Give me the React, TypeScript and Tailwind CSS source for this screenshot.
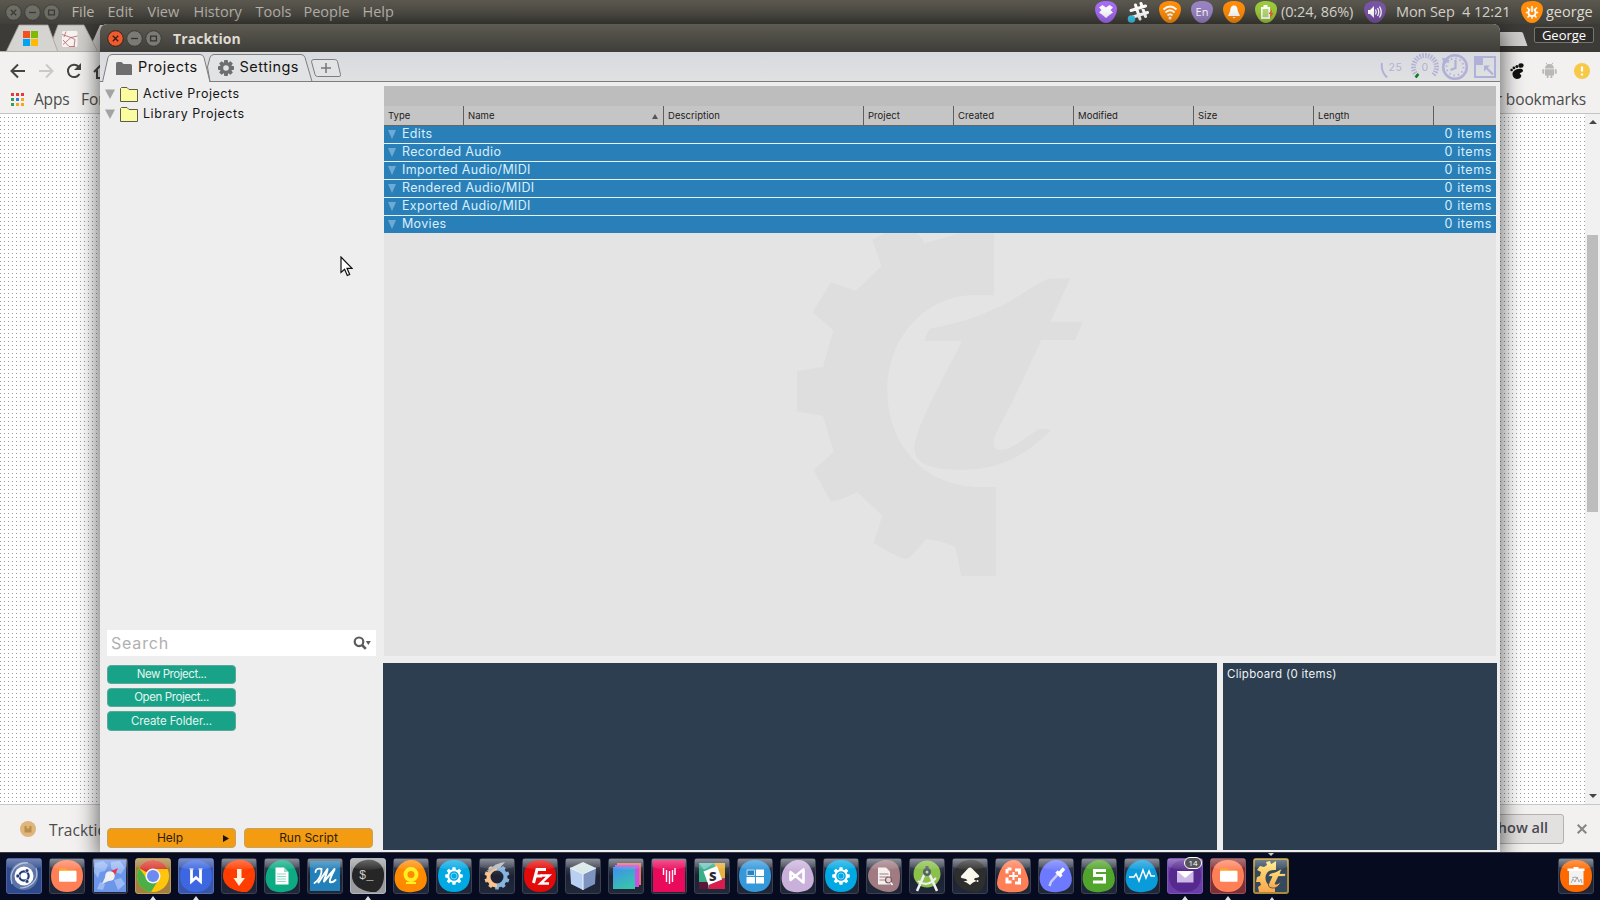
import type { ReactNode } from "react";

/* ---------- system bar ---------- */

function WinButton({ kind, hot = false }: { kind: "close" | "min" | "max"; hot?: boolean }) {
  return (
    <svg width="17" height="17" viewBox="0 0 17 17" className="shrink-0">
      <circle cx="8.5" cy="8.5" r="7.8" fill={hot ? "#ef5b2e" : "#7b7a74"} stroke={hot ? "#33251f" : "#3a3934"} strokeWidth="1" />
      <g fill="none" stroke={hot ? "#3c1c10" : "#35342f"} strokeWidth="1.3">
        {kind === "close" && <path d="M5.8 5.8l5.4 5.4M11.2 5.8l-5.4 5.4" />}
        {kind === "min" && <path d="M5 8.5h7" />}
        {kind === "max" && <path d="M5.6 6.1h5.8v4.8H5.6z" />}
      </g>
    </svg>
  );
}

const menus: [string, string][] = [
  ["File", "w-[36px]"],
  ["Edit", "w-[40px]"],
  ["View", "w-[46px]"],
  ["History", "w-[62px]"],
  ["Tools", "w-[48px]"],
  ["People", "w-[59px]"],
  ["Help", "w-[40px]"],
];

function Indicator({ color, children }: { color: string; children: ReactNode }) {
  return (
    <svg width="22" height="22" viewBox="0 0 22 22" className="shrink-0">
      <path d="M11 0C17 0 22 2.500 22 8C22 14 17 22 11 22C5 22 0 14 0 8C0 2.500 5 0 11 0z" fill={color} />
      {children}
    </svg>
  );
}

function SystemBar() {
  return (
    <div className="flex h-6 shrink-0 items-center bg-linear-to-b from-[#5b594f] to-[#403f3a] text-[14.5px] text-[#dfdbd2]">
      <div className="flex w-[71px] gap-[2px] pl-[5px] opacity-70">
        <WinButton kind="close" />
        <WinButton kind="min" />
        <WinButton kind="max" />
      </div>
      <div className="flex pl-[0.500px] text-[#bab6ad]">
        {menus.map(([label, w]) => (
          <span key={label} className={`${w} whitespace-nowrap`}>{label}</span>
        ))}
      </div>
      <div className="ml-auto flex items-center">
        <div className="flex gap-[10px]">
          <Indicator color="#a66cf5">
            <path d="M7.500 4L11 6.500L14.500 4L18 6.500L15.500 9L18 11.500L14.500 14L11 17L7.500 14L4 11.500L6.500 9L4 6.500z" fill="#fff" />
          </Indicator>
          <svg width="22" height="22" viewBox="0 0 22 22">
            <g stroke="#fff" strokeWidth="3" strokeLinecap="round">
              <path d="M8.500 4l4.500 14M14 2.500l4.500 13M4 9.500l14.500-4.500M6 16l14.500-4.500" />
            </g>
            <circle cx="4.500" cy="18" r="3.800" fill="#3fc8ee" />
          </svg>
          <Indicator color="#ff8c0a">
            <g fill="none" stroke="#fff" strokeWidth="1.900">
              <path d="M4.500 8.500Q11 2.500 17.500 8.500M6.500 11.500Q11 7 15.500 11.500M8.500 14.500Q11 12 13.500 14.500" />
            </g>
            <circle cx="11" cy="17" r="1.500" fill="#fff" />
          </Indicator>
          <Indicator color="#9a83c3">
            <text x="11" y="15" textAnchor="middle" fontSize="11" fill="#fff">En</text>
          </Indicator>
          <Indicator color="#ff8c0a">
            <path d="M11 4.500c3 0 3.600 2.500 3.800 5.500L17 15H5l2.200-5c.2-3 .8-5.500 3.800-5.500zM9.500 16h3l-1.500 1.500z" fill="#fff" />
          </Indicator>
          <Indicator color="#9ccb3b">
            <path d="M6 6h2.500V4h4v2H15v12H6z" fill="#fff" />
            <path d="M7.600 8h5.800v8H7.600z" fill="#b8dc72" />
            <path d="M17 8l-3.500 5h2l-.5 4 3.500-5h-2z" fill="#f05a3a" />
          </Indicator>
        </div>
        <span className="ml-[4px] w-[83px] whitespace-nowrap tracking-[-0.100px]">(0:24, 86%)</span>
        <Indicator color="#7a55a7">
          <path d="M4 9h2l4-4v12l-4-4H4z" fill="#fff" />
          <g fill="none" stroke="#fff" strokeWidth="1.300">
            <path d="M11.500 8.500q1.500 2.500 0 5M13.500 7q2.500 4 0 8M15.500 5.500q3.500 5.500 0 11" />
          </g>
        </Indicator>
        <span className="ml-[10px] w-[125px] whitespace-pre tracking-[-0.1px]">Mon Sep  4 12:21</span>
        <Indicator color="#ff8c0a">
          <circle cx="11" cy="11.500" r="3.600" fill="none" stroke="#fff" strokeWidth="2" />
          <path d="M9.300 5.500h3.400v4H9.300z" fill="#ff8c0a" />
          <path d="M11 5v6M6 6.500l2.200 2.200M16 6.500l-2.200 2.200M4.800 11.500h2.500M14.700 11.500h2.500M6.500 16.500l2-2M15.500 16.500l-2-2M11 15v2.800" stroke="#fff" strokeWidth="1.600" />
        </Indicator>
        <span className="ml-[3px] w-[54px] whitespace-nowrap">george</span>
      </div>
    </div>
  );
}

/* ---------- browser behind the window ---------- */

function Browser() {
  return (
    <div className="flex h-[828px] shrink-0 flex-col bg-white text-[#4c4c4c]">
      <div className="flex h-7 shrink-0 items-end justify-between bg-[#3c3b37]">
        <svg width="110" height="28" viewBox="0 0 110 28">
          <path d="M88 28L100 1H110V28z" fill="#cfcdca" />
          <path d="M48 28L58 1H84L98 28z" fill="#d1cfcc" stroke="#a3a09c" strokeWidth=".8" />
          <path d="M6 28L19 1H48L58 28z" fill="#d6d4d1" stroke="#a3a09c" strokeWidth=".8" />
          <path d="M23 7h7v7h-7z" fill="#f4511e" />
          <path d="M31 7h7v7h-7z" fill="#7fba00" />
          <path d="M23 15h7v7h-7z" fill="#00a4ef" />
          <path d="M31 15h7v7h-7z" fill="#ffb900" />
          <rect x="62" y="7" width="15.500" height="16" rx="1.500" fill="#f6f3f2" />
          <path d="M62 10.500l9 3 6.500-1.500M66 7.500l-2 5.500M71 13.500l-8 7M71 13.500l4 2-1 7M63 16l6 6.500h6" stroke="#b9605c" strokeWidth=".8" fill="none" />
          <path d="M0 27.500H110" stroke="#b5b2ae" strokeWidth="1" />
        </svg>
        <div className="flex items-start self-stretch">
          <svg width="34" height="28" viewBox="0 0 34 28">
            <path d="M0 8H21q1.500 0 2 1.300L27.500 22H0z" fill="#cfcecc" />
          </svg>
          <div className="mt-[3px] mr-[6px] flex h-4 w-[60px] items-center justify-center rounded-[2px] border border-[#777570] bg-[#2f2e2b] pt-px text-[13px] text-white">
            George
          </div>
        </div>
      </div>

      <div className="flex h-[37px] shrink-0 items-center justify-between bg-[#f2f1f0]">
        <svg width="110" height="37" viewBox="0 0 110 37" fill="none" strokeWidth="2">
          <path d="M25 19H12M18 12.500L11.500 19L18 25.500" stroke="#444" />
          <path d="M39 19H52M46 12.500L52.500 19L46 25.500" stroke="#cbc9c7" />
          <path d="M79.500 22A6.200 6.200 0 1 1 78.500 14.500" stroke="#444" />
          <path d="M81 11v7h-7z" fill="#444" />
          <path d="M94 20l7-7M97 18v8h8" stroke="#444" />
        </svg>
        <div className="flex items-center gap-[16px] pr-[10px]">
          <svg width="16" height="16" viewBox="0 0 16 16" fill="#111">
            <ellipse cx="12" cy="2.500" rx="2.600" ry="2.300" />
            <circle cx="7.900" cy="3.400" r="1.500" />
            <circle cx="4.900" cy="4.900" r="1.400" />
            <circle cx="2.600" cy="7" r="1.300" />
            <path d="M4 9c2-3.500 10-4.500 10-1.500 0 2.200-3 1.800-3.200 3.200-.1 1 1.500.3 1.500 2C12 15 10 16 8 16 4.500 16 2.500 11.500 4 9z" />
          </svg>
          <svg width="17" height="17" viewBox="0 0 17 17" fill="#b9b8b6">
            <path d="M4 6.500a4.500 4.500 0 0 1 9 0zM4 7.200h9v6.300H4zM1.300 7.300h1.900v4.500H1.300zM13.800 7.300h1.900v4.500h-1.900zM5.700 13.500h1.800V16H5.700zM9.500 13.500h1.800V16H9.500z" />
            <path d="M5 .8l1.500 2M12 .8l-1.500 2" stroke="#b9b8b6" />
          </svg>
          <svg width="16" height="16" viewBox="0 0 16 16">
            <circle cx="8" cy="8" r="8" fill="#f8c947" />
            <path d="M8 3.500v5M8 10.500v2" stroke="#fff" strokeWidth="2.200" />
          </svg>
        </div>
      </div>

      <div className="flex h-[25px] shrink-0 items-center border-b border-[#c6c4c1] bg-[#f2f1f0] pb-[3px] text-[15.500px]">
        <svg width="13" height="13" viewBox="0 0 13 13" className="-mt-px ml-[11px]">
          {["#e53935", "#e53935", "#e53935", "#2ea05a", "#2f7de1", "#f5a623", "#2ea05a", "#f5a623", "#f5a623"].map((c, i) => (
            <rect key={i} x={(i % 3) * 5} y={Math.floor(i / 3) * 5} width="3" height="3" fill={c} />
          ))}
        </svg>
        <span className="ml-[10px] w-[47px] tracking-[-0.2px]">Apps</span>
        <span>For</span>
        <span className="mr-[14px] ml-auto tracking-[-0.1px]">Other bookmarks</span>
      </div>

      <div className="flex min-h-0 flex-1">
        <div className="flex-1 bg-[conic-gradient(from_270deg_at_1px_1px,#9c9c9c_90deg,transparent_0)] bg-size-[4px_4px] bg-position-[0_3px]" />
        <div className="flex w-[15px] flex-col items-center justify-between bg-[#f1f1f1] pt-[6px] pb-[6px]">
          <svg width="8" height="4" viewBox="0 0 8 4"><path d="M0 4L4 0L8 4z" fill="#454545" /></svg>
          <div className="mt-[-171px] h-[277px] w-[11px] bg-[#bdbdbd]" />
          <svg width="8" height="4" viewBox="0 0 8 4"><path d="M0 0L4 4L8 0z" fill="#454545" /></svg>
        </div>
      </div>

      <div className="flex h-12 shrink-0 items-center border-t border-[#c9c8c6] bg-[#f2f1f0]">
        <svg width="16" height="16" viewBox="0 0 16 16" className="ml-[20px]">
          <circle cx="8" cy="8" r="8" fill="#dfb57c" />
          <path d="M4.500 5h2.200v2.500h2.600V5h2.200v6.500h-7z" fill="#b98d4c" />
        </svg>
        <span className="ml-[13px] pt-[4px] text-[15.500px]">Tracktion</span>
        <div className="ml-auto flex h-[30px] w-[94px] items-center justify-end rounded-[3px] border border-[#b4b2b0] bg-[#e2e1df] pr-[15px] text-[14.500px] font-semibold text-[#4a4a52]">
          Show all
        </div>
        <svg width="10" height="10" viewBox="0 0 10 10" className="mr-[13px] ml-[13px]">
          <path d="M.7 .7l8.600 8.600M9.300 .7L.7 9.300" stroke="#858585" strokeWidth="2" />
        </svg>
      </div>
    </div>
  );
}

/* ---------- Tracktion window ---------- */

function TitleBar() {
  return (
    <div className="flex h-7 shrink-0 items-center rounded-t-[7px] bg-linear-to-b from-[#5d5b52] to-[#3e3d38] pl-[7px] text-[14px] font-bold text-[#dfdbd2]">
      <div className="flex w-[66px] gap-[2px] pt-px">
        <WinButton kind="close" hot />
        <WinButton kind="min" />
        <WinButton kind="max" />
      </div>
      <span className="pt-px tracking-[0.1px]">Tracktion</span>
    </div>
  );
}

function StatusIcons() {
  return (
    <svg width="120" height="29" viewBox="1380 52 120 29" className="absolute top-0 right-0" fill="none" stroke="#b1b0d8">
      <path d="M1382 63q-1.500 8 5 14.500" strokeWidth="2" />
      <text x="1388.500" y="71" fontSize="10.500" fill="#b1b0d8" stroke="none">25</text>
      <path d="M1417.200 75.500A11.500 11.500 0 1 1 1432.800 75.500" strokeWidth="5" strokeDasharray="1.500 1.250" />
      <path d="M1418.300 74l-2.600 3.500" stroke="#0a7d14" strokeWidth="2.500" />
      <text x="1425" y="71" fontSize="10.500" fill="#b1b0d8" stroke="none" textAnchor="middle">0</text>
      <circle cx="1455" cy="67" r="11.800" strokeWidth="2.600" />
      <circle cx="1455" cy="67" r="8.500" strokeWidth="1.800" strokeDasharray="1.500 2.950" />
      <path d="M1455.500 60v8l-5 2" strokeWidth="2.200" />
      <path d="M1442 57.500l8 2.500-6 5z" fill="#b1b0d8" stroke="none" />
      <rect x="1475" y="57" width="20" height="20" strokeWidth="2" />
      <path d="M1475 57h8v8h-8z" fill="#b1b0d8" stroke="none" />
      <path d="M1485 66.500l8 8" strokeWidth="2.200" />
      <path d="M1484 65.500h6l-6 6z" fill="#b1b0d8" stroke="none" />
    </svg>
  );
}

function Tabs() {
  return (
    <div className="relative flex h-[30px] shrink-0 items-center bg-linear-to-b from-[#d9dadf] to-[#e0e1e2] text-[14.500px] tracking-[0.500px] text-[#161616]">
      <svg width="1400" height="30" viewBox="100 52 1400 30" className="absolute inset-0" stroke="#7d7d7d">
        <path d="M207.500 67L210 57.500Q211 54.500 214 54.500H301Q304 54.500 305 57.500L312 81.500H210z" fill="#e2e3e4" />
        <path d="M100 81.500H1500" />
        <path d="M102.500 82L108 57.500Q109 54.500 112 54.500H200Q203 54.500 204 57.500L210 82z" fill="#eeeeee" />
        <path d="M103.500 81.500H209" stroke="#eeeeee" strokeWidth="2" />
        <path d="M314 59.500H334.500Q337 59.500 337.500 61.500L340.500 74.500Q341 76.500 339 76.500H317.500Q315.500 76.500 315 74.500L311.500 61.500Q311.500 59.500 314 59.500z" fill="#e2e3e4" />
        <path d="M321 68H331M326 63V73" strokeWidth="1.500" stroke="#777" />
        <g fill="#6e6e6e" stroke="none">
          <path d="M116 63.500Q116 62 117.500 62H121.500L123.500 64H130.500Q132 64 132 65.500V75H116z" />
          <g transform="translate(226 68)">
            {[0, 45, 90, 135, 180, 225, 270, 315].map((a) => (
              <path key={a} d="M-1.700 -8H1.700L2.200 -5H-2.200z" transform={`rotate(${a})`} />
            ))}
          </g>
        </g>
        <circle cx="226" cy="68" r="4.300" fill="none" stroke="#6e6e6e" strokeWidth="3" />
      </svg>
      <span className="relative ml-[38px] w-[101.500px]">Projects</span>
      <span className="relative">Settings</span>
      <StatusIcons />
    </div>
  );
}

function TreeRow({ label }: { label: string }) {
  return (
    <div className="flex h-5 items-center text-[12.500px] tracking-[0.550px] text-[#161616]">
      <svg width="10" height="10" viewBox="0 0 10 10"><path d="M0 .5H10L5 10z" fill="#a3a3a3" /></svg>
      <svg width="18" height="15" viewBox="0 0 18 15" className="mx-[5px]">
        <path d="M.5 14.500V1.500L1.500 .5H7L9 2.500H17.500V14.500z" fill="#fbfba0" stroke="#5c5c48" />
      </svg>
      <span className="whitespace-nowrap">{label}</span>
    </div>
  );
}

const btn = "flex items-center justify-center rounded-[4px] border";

function Sidebar() {
  return (
    <div className="flex w-[283px] shrink-0 flex-col pt-[2px]">
      <div className="pl-[5px]">
        <TreeRow label="Active Projects" />
        <TreeRow label="Library Projects" />
      </div>
      <div className="mt-auto ml-[7px] flex h-[26px] w-[269px] items-center justify-between bg-white pr-[5px] pl-[4px] text-[16px] tracking-[0.800px] text-[#b0b0b0]">
        <span>Search</span>
        <svg width="18" height="14" viewBox="0 0 18 14">
          <circle cx="6" cy="5.800" r="4.300" fill="none" stroke="#5c5c5c" strokeWidth="2.200" />
          <path d="M9 9l3.800 3.800" stroke="#5c5c5c" strokeWidth="2.600" />
          <path d="M12.800 5h5l-2.500 4z" fill="#5c5c5c" />
        </svg>
      </div>
      <div className="mt-[9px] ml-[7px] flex w-[129px] flex-col gap-1 text-[11.500px] text-[#e3f5f0]">
        <div className={`${btn} h-[19px] border-[#5aa897] bg-[#18a287] tracking-[-0.450px]`}>New Project...</div>
        <div className={`${btn} h-[19px] border-[#5aa897] bg-[#18a287] tracking-[-0.400px]`}>Open Project...</div>
        <div className={`${btn} h-5 border-[#5aa897] bg-[#18a287] pt-px tracking-[-0.100px]`}>Create Folder...</div>
      </div>
      <div className="mt-[97px] mb-[4px] ml-[7px] flex gap-2 text-[12px] text-[#2b1d05]">
        <div className={`${btn} relative h-5 w-[129px] border-[#c5a263] bg-[#f39c12] pr-[3px]`}>
          Help
          <svg width="6" height="7" viewBox="0 0 6 7" className="absolute right-[6px]"><path d="M0 0L6 3.500L0 7z" fill="#1b1204" /></svg>
        </div>
        <div className={`${btn} h-5 w-[129px] border-[#c5a263] bg-[#f39c12]`}>Run Script</div>
      </div>
    </div>
  );
}

const columns: [string, string][] = [
  ["Type", "w-[80px]"],
  ["Name", "w-[200px]"],
  ["Description", "w-[200px]"],
  ["Project", "w-[90px]"],
  ["Created", "w-[120px]"],
  ["Modified", "w-[120px]"],
  ["Size", "w-[120px]"],
  ["Length", "w-[120px]"],
];

const groups = ["Edits", "Recorded Audio", "Imported Audio/MIDI", "Rendered Audio/MIDI", "Exported Audio/MIDI", "Movies"];

function Watermark() {
  return (
    <svg width="1112" height="423" viewBox="384 233 1112 423" className="block">
      <g transform="translate(780 220) scale(.333333)" fill="#dedede">
        <path d="M642 20V226H580C440 226 322 350 322 510C322 680 440 801 600 801H648V1068H544L526 980Q480 962 440 957C420 975 405 1000 382 1017Q360 1018 281 968L307 887L232 816Q190 838 153 845L101 751L161 695L129 588L51 574V454L129 440L160 331L98 277L153 187L228 212L305 138L277 60L340 25H400L434 69L560 35V20z" />
        <path d="M810 175H871L811 305H909L885 360H784Q740 455 700 540L650 635Q640 655 641 672Q644 690 662 690C700 688 745 645 778 627Q790 624 812 631C740 705 660 749 545 749C450 749 403 735 403 680C410 620 470 510 547 363H433Q436 345 449 326Q560 308 655 262C710 235 760 195 810 175z" />
      </g>
    </svg>
  );
}

function AssetTable() {
  return (
    <div className="ml-px flex h-[570px] w-[1112px] flex-col bg-[#e4e4e4]">
      <div className="h-5 shrink-0 bg-[#bdbdbd]" />
      <div className="flex h-5 shrink-0 border-b border-[#666] bg-[#c5c5c5] text-[9.500px] tracking-[0.050px] text-[#1c1c1c]">
        {columns.map(([c, w]) => (
          <div key={c} className={`${w} flex shrink-0 items-center justify-between border-r border-[#5f5f5f] pt-px pr-[5px] pl-[4px]`}>
            <span>{c}</span>
            {c === "Name" && <svg width="6" height="5" viewBox="0 0 6 5"><path d="M3 0L6 5H0z" fill="#555" /></svg>}
          </div>
        ))}
      </div>
      <div className="flex shrink-0 flex-col gap-px bg-[#e9f1f7]">
        {groups.map((g) => (
          <div key={g} className="flex h-[17px] items-center bg-[#2980b9] pr-[4px] pl-[4px] text-[12.500px] tracking-[0.330px] text-[#d9eefb]">
            <svg width="8" height="9" viewBox="0 0 8 9"><path d="M0 0H8L4 9z" fill="#6eaad3" /></svg>
            <span className="ml-[6px]">{g}</span>
            <span className="ml-auto tracking-[0.600px]">0 items</span>
          </div>
        ))}
      </div>
      <Watermark />
    </div>
  );
}

function TracktionWindow() {
  return (
    <div className="absolute top-[24px] left-[100px] flex h-[828px] w-[1400px] flex-col rounded-t-[7px] bg-[#eeeeee] font-['Inter',sans-serif] shadow-[0_5px_22px_2px_rgba(0,0,0,0.6)]">
      <div className="font-['Open_Sans','Noto_Sans',sans-serif]">
        <TitleBar />
      </div>
      <Tabs />
      <div className="flex min-h-0 flex-1">
        <Sidebar />
        <div className="flex flex-1 flex-col pt-[4px]">
          <AssetTable />
          <div className="mt-[7px] flex h-[187px] gap-[6px]">
            <div className="w-[834px] bg-[#2d3e50]" />
            <div className="w-[274px] bg-[#2d3e50] px-[4px] pt-[6px] text-[11.500px] tracking-[0.300px] text-[#eef2f5]">Clipboard (0 items)</div>
          </div>
        </div>
      </div>
    </div>
  );
}

/* ---------- dock ---------- */

const round = "M18 2C28 2 34 8 34 18S28 34 18 34S2 28 2 18S8 2 18 2z";
const blobA = "M16 2C28 0 35 9 34 18C34 26 30 32 26 34C18 35 2 30 2 18C2 10 7 3 16 2z";
const blobB = "M17 2C27 1 31 9 33 16C36 26 31 33 20 34C10 35 4 32 2 24C0 12 8 3 17 2z";

function Gear({ color }: { color: string }) {
  return (
    <g>
      <circle cx="18" cy="18" r="5.800" fill="none" stroke={color} strokeWidth="2" />
      <circle cx="18" cy="18" r="3" fill="none" stroke={color} strokeWidth=".8" opacity=".6" />
      {[0, 45, 90, 135, 180, 225, 270, 315].map((a) => (
        <path key={a} d="M16.500 9.200h3l.4 3h-3.800z" fill={color} transform={`rotate(${a} 18 18)`} />
      ))}
    </g>
  );
}

function FolderGlyph() {
  return (
    <g>
      <path d="M10 10.500h7l1.500 1.500H27v4H10z" fill="#ffa31a" />
      <rect x="10" y="12.800" width="17.500" height="11" rx="1" fill="#fff" />
    </g>
  );
}

type DockItem = { id: string; tile?: string; run?: boolean; top?: boolean; badge?: string; art: ReactNode };

const dock: DockItem[] = [
  { id: "ubuntu", tile: "bg-[#2f4a8c] border-[#4a63a0]", art: (
    <g>
      <circle cx="18" cy="18" r="14" fill="#8296bd" opacity=".55" />
      <path d="M6 26C2 12 12 4 22 5M30 10c4 12-6 20-16 20" stroke="#b5c2da" strokeWidth="1.200" fill="none" />
      <circle cx="18" cy="18" r="9.500" fill="#fff" />
      <circle cx="18" cy="18" r="4.700" fill="none" stroke="#203a75" strokeWidth="2.200" />
      <circle cx="11.800" cy="18" r="1.900" fill="#203a75" stroke="#fff" strokeWidth=".6" />
      <circle cx="21" cy="12.600" r="1.900" fill="#203a75" stroke="#fff" strokeWidth=".6" />
      <circle cx="21" cy="23.400" r="1.900" fill="#203a75" stroke="#fff" strokeWidth=".6" />
    </g>
  ) },
  { id: "files", art: <g><path d={round} fill="#ff7f57" /><FolderGlyph /></g> },
  { id: "browser", art: (
    <g>
      <rect x="2" y="2" width="32" height="32" fill="#6c96ea" />
      <path d="M3 5l8-2 5 4-3 6-5 1-2 6-4-6zM19 4l9-1 5 7-4 6-6-2-4-4zM22 22l7-2 4 6-7 6zM8 24l5 2-2 6-6-1z" fill="#9bb9f3" />
      <path d="M26 10L21 21L15 15z" fill="#e8334a" />
      <path d="M10 26L15 15L21 21z" fill="#f1ede6" />
      <circle cx="18" cy="18" r="4.800" fill="#f1f1f1" />
    </g>
  ) },
  { id: "chrome", tile: "bg-[#a3803f] border-[#b99a60]", run: true, art: (
    <g>
      <circle cx="18" cy="18" r="16" fill="#fdc50c" />
      <path d="M18 18L4.200 10A16 16 0 0 1 32.500 11H18z" fill="#d93a2f" />
      <path d="M4.200 10A16 16 0 0 0 16 34L24 21L12 21z" fill="#4caf46" />
      <circle cx="18" cy="18" r="7.600" fill="#f4f4f4" />
      <circle cx="18" cy="18" r="6" fill="#6b8bf0" />
    </g>
  ) },
  { id: "writer", tile: "bg-[#3a56a8] border-[#5670b8]", run: true, art: (
    <g>
      <path d={round} fill="#3d67e0" />
      <path d="M13.500 11.500V23.500L18 19.500L22.500 23.500V11.500" fill="none" stroke="#fff" strokeWidth="2.800" />
      <path d="M11.500 11h4M20.500 11h4" stroke="#fff" strokeWidth="1" />
    </g>
  ) },
  { id: "download", art: <g><path d={blobA} fill="#ff3d00" /><path d="M16 11h4.500v9h3.500L18 28l-5.500-8H16z" fill="#fff0dc" /></g> },
  { id: "document", art: (
    <g>
      <path d={blobB} fill="#0cab83" />
      <path d="M11.500 9.500h8.500l4.500 4.500V26.500h-13z" fill="#fff" />
      <path d="M20 9.500V14h4.500z" fill="#9adcc9" />
      <path d="M13 16h9M13 18.500h9M13 21h9M13 23.500h9" stroke="#8fd8c4" strokeWidth="1" />
    </g>
  ) },
  { id: "mscript", art: (
    <g>
      <rect x="3" y="3" width="30" height="30" fill="#2380b8" />
      <path d="M8.500 14C8.500 11 11.500 10 14.500 11C15 16 12.500 22 7.500 25" fill="none" stroke="#fff" strokeWidth="1.900" strokeLinecap="round" />
      <path d="M20.500 11L11.500 24.500M20.500 11.500C20 15 18 19 17 23M27.500 11L17 23.500M27.500 11.500C25.500 16 22 21 23 24C25 25 27 23.500 28.500 22" fill="none" stroke="#fff" strokeWidth="2" strokeLinecap="round" />
    </g>
  ) },
  { id: "terminal", tile: "bg-[#9b9ca0] border-[#b4b5b8]", run: true, art: (
    <g>
      <path d={blobA} fill="#262626" />
      <text x="9" y="21" fontSize="12" fill="#cfcfcf" fontFamily="Liberation Mono, monospace">$_</text>
    </g>
  ) },
  { id: "webcam", art: (
    <g>
      <path d={blobB} fill="#ff8a00" />
      <circle cx="18" cy="16.500" r="5.500" fill="none" stroke="#ffee22" strokeWidth="4" />
      <path d="M13 24h10v2H13z" fill="#ffee22" />
    </g>
  ) },
  { id: "settings", art: <g><path d={round} fill="#00a8e4" /><Gear color="#fff" /></g> },
  { id: "tweak", art: (
    <g>
      {[0, 36, 72, 108, 144, 180, 216, 252, 288, 324].map((a) => (
        <path key={a} d="M16.300 6.500h3.400l.5 4h-4.400z" fill={a > 190 ? "#f6c08c" : "#86b4dc"} transform={`rotate(${a} 18 19)`} />
      ))}
      <path d="M18 10.500a8.500 8.500 0 0 1 0 17" fill="none" stroke="#86b4dc" strokeWidth="4" />
      <path d="M18 27.500a8.500 8.500 0 0 1 0-17" fill="none" stroke="#fbc38d" strokeWidth="4" />
      <path d="M8 12.500q8-7 18-8.500l-5 6q-6-.5-11 5z" fill="#b4b7bc" />
    </g>
  ) },
  { id: "ftp", art: (
    <g>
      <path d={round} fill="#e30a0a" />
      <path d="M11.500 25L15 11.500H24M13.500 18H20" fill="none" stroke="#fff" strokeWidth="3" />
      <path d="M18.500 17.500H27L18.500 25.500H27" fill="none" stroke="#fff" strokeWidth="2.500" />
    </g>
  ) },
  { id: "cube", art: (
    <g>
      <path d="M18 4L31 10L18 16L5 10z" fill="#d9e8e8" />
      <path d="M5 10L18 16V32L6 26z" fill="#b9d0f2" />
      <path d="M31 10L18 16V32L30 26z" fill="#7d93c0" />
      <path d="M18 16V32M5 10L18 16L31 10" stroke="#f3f8ff" strokeWidth="1" fill="none" />
    </g>
  ) },
  { id: "layers", art: (
    <g>
      <rect x="9" y="5" width="24" height="22" fill="#e8765c" />
      <rect x="7" y="7" width="24" height="22" fill="#c850e8" />
      <rect x="5" y="9" width="22" height="22" fill="url(#layerFill)" />
    </g>
  ) },
  { id: "pink", art: (
    <g>
      <rect x="2" y="2" width="32" height="32" fill="#e90a5c" />
      <path d="M12.500 10v7M15.500 12v12M18.500 13v13M21.500 12v12M24 10v7" stroke="#fff" strokeWidth="1.400" />
    </g>
  ) },
  { id: "slack", art: (
    <g>
      <rect x="5" y="5" width="26" height="26" fill="#3aae88" />
      <path d="M20 5H31V20L25 20z" fill="#e8b13b" />
      <path d="M31 20V31H14L16 25z" fill="#d81d4e" />
      <path d="M5 31V24L14 24V31z" fill="#5b1738" />
      <path d="M5 5H20L10 12z" fill="#72c5c2" />
      <path d="M9.500 13.500L23 8L28 21.500L14.500 27z" fill="#fff" />
      <text x="18.700" y="22.500" fontSize="13" fontWeight="900" fill="#2c2c34" textAnchor="middle">S</text>
    </g>
  ) },
  { id: "windows", art: (
    <g>
      <path d={round} fill="#3498db" />
      <path d="M19 11.500h8V18h-8zM9.500 19h8.500v6.500H9.500zM19 19h8v6.500h-8z" fill="#fff" />
      <path d="M10 12h7.500v5.500H10z" fill="#2c80bb" stroke="#bfe0f5" />
    </g>
  ) },
  { id: "vs", art: (
    <g>
      <path d={blobB} fill="#c9b1dc" />
      <path d="M10.500 14v8L23.500 11.500v13z" fill="none" stroke="#fff" strokeWidth="2.600" strokeLinejoin="round" />
    </g>
  ) },
  { id: "settings2", art: <g><path d={round} fill="#00a8e4" /><Gear color="#fff" /></g> },
  { id: "search", art: (
    <g>
      <path d="M20 2C30 2 34 8 34 18C34 28 32 33 24 34C14 34 2 28 2 18C2 9 12 2 20 2z" fill="#a07c82" />
      <path d="M12 9.500h8l4 4V26.500H12z" fill="#f5eff0" />
      <path d="M13.500 16h9M13.500 19h9M13.500 22h6" stroke="#a07c82" strokeWidth="1" />
      <circle cx="22.500" cy="22" r="3" fill="#e2d5d7" stroke="#7b585e" strokeWidth="1.200" />
      <path d="M24.500 24.500l2 2.500" stroke="#fff" strokeWidth="1.600" />
    </g>
  ) },
  { id: "android", art: (
    <g>
      <circle cx="18" cy="16" r="13.500" fill="#8bc04a" />
      <path d="M16 15L8 33M20 15L28 33" stroke="#efefef" strokeWidth="2.600" />
      <path d="M9 23Q18 30 27 20" fill="none" stroke="#efefef" strokeWidth="2" />
      <circle cx="18" cy="14" r="4" fill="#52606a" />
      <path d="M16.500 8h3v4h-3z" fill="#52606a" />
      <circle cx="18" cy="14" r="1.500" fill="#b9d899" />
    </g>
  ) },
  { id: "inkscape", art: (
    <g>
      <path d={blobA} fill="#2e2e2e" />
      <path d="M18 9.500Q19 9.500 20 10.500L27 17.500Q28 19.500 23 20L22 21.500L24.500 23L21 24.500L18 27L14.500 24.500L11.500 23.500L15.500 22.500L14 21L9.500 20Q8 19 9.500 17.500L16 10.500Q17 9.500 18 9.500z" fill="#fbf9ec" />
      <circle cx="25.500" cy="23" r="1" fill="#fbf9ec" />
    </g>
  ) },
  { id: "shot", art: (
    <g>
      <path d="M14 3C22 0 27 4 31 14C36 26 34 32 24 34C12 35 2 34 2 25C3 15 7 6 14 3z" fill="#ff7f57" />
      <path d="M12.500 11H16.500M12 15.500V11M20 12H26M24.500 12V16.500M12 19.500V24H16.500M20 25H26M24.500 20V26" fill="none" stroke="#fff" strokeWidth="3" />
      <path d="M18.500 14v8M14 18h9" stroke="#fff" strokeWidth="2" />
    </g>
  ) },
  { id: "picker", art: (
    <g>
      <path d={blobB} fill="#6d79ff" />
      <path d="M21 15L13 24L11.500 28" stroke="#c9cdfd" strokeWidth="2.500" />
      <path d="M18.500 13.500L23.500 18.500M21 16L26 10.500" stroke="#fff" strokeWidth="3.400" />
    </g>
  ) },
  { id: "green", art: (
    <g>
      <path d={blobB} fill="#52a52c" />
      <path d="M25 12.500H13.500V17.500H23.500V24H12" fill="none" stroke="#fff" strokeWidth="3" />
    </g>
  ) },
  { id: "monitor", art: (
    <g>
      <path d={blobB} fill="#0a9bdb" />
      <path d="M5 19H10L12 16L15 23L19 12L22 20L25 13L27 18H31" fill="none" stroke="#fff" strokeWidth="1.500" />
    </g>
  ) },
  { id: "mail", tile: "bg-[#6a3da8] border-[#7d55b5]", run: true, badge: "14", art: (
    <g>
      <path d={round} fill="#55298e" />
      <path d="M10 13h16.500v11.500H10z" fill="#cdb8e6" />
      <path d="M10 13h16.500L18.200 20z" fill="#fff" />
    </g>
  ) },
  { id: "files2", tile: "bg-[#7d3038] border-[#95525a]", run: true, art: <g><path d={round} fill="#ff7f57" /><FolderGlyph /></g> },
  { id: "tracktion", tile: "bg-[#34495e] border-[#a98a3a] border-2", run: true, top: true, art: (
    <g fill="url(#gold)">
      <path d="M23 3V12C15 11 11 17 13 23C14 27 18 29 22 28V34H6L5 29L8 27L7 24H3L4 19L7 18L8 14L4 12L7 8L11 9L14 7L13 4L17 3L18 6L20 5z" />
      <path d="M29 10.500L27 15.500H33L32 18.500H25.500L22 26Q24 27 28 23.500Q25 31 19 30Q14 29 16 25L19 18.500H15L17 15.500Q23 14.500 29 10.500z" stroke="#34495e" strokeWidth=".8" />
    </g>
  ) },
];

function Tile({ item }: { item: DockItem }) {
  return (
    <div className={`relative size-9 shrink-0 rounded-[3px] border ${item.tile ?? "border-[#3a4050] bg-linear-to-b from-[#555a68] via-[#1c2233] to-[#20283a]"}`}>
      <svg viewBox="0 0 36 36" width="36" height="36" className={item.top ? "-m-[2px]" : "-m-px"}>
        {item.art}
        <path d="M1 1H35V9Q18 15 1 9z" fill="url(#gloss)" />
      </svg>
      {item.badge && (
        <span className="absolute -top-[2px] right-0 flex h-[12px] w-[18px] items-center justify-center rounded-full border border-white bg-[#55565a] text-[8px] text-white">
          {item.badge}
        </span>
      )}
      {item.run && (
        <svg width="8" height="4" viewBox="0 0 8 4" className="absolute top-[37px] left-[13px]"><path d="M4 0L7 4H1z" fill="#e0e0e0" /></svg>
      )}
      {item.top && (
        <svg width="6" height="3" viewBox="0 0 6 3" className="absolute -top-[7px] left-[13px]"><path d="M0 0H6L3 3z" fill="#c9c9c9" /></svg>
      )}
    </div>
  );
}

function Dock() {
  return (
    <div className="relative flex h-12 shrink-0 items-start gap-[7px] border-t border-[#383c46] bg-[#060b20] px-[6px] pt-[5px]">
      <svg width="0" height="0" className="absolute">
        <defs>
          <linearGradient id="gloss" x1="0" y1="0" x2="0" y2="1">
            <stop offset="0" stopColor="#fff" stopOpacity=".32" />
            <stop offset="1" stopColor="#fff" stopOpacity=".05" />
          </linearGradient>
          <linearGradient id="layerFill" x1="0" y1="0" x2=".5" y2="1">
            <stop offset="0" stopColor="#3f8ef0" />
            <stop offset="1" stopColor="#37c3ae" />
          </linearGradient>
          <linearGradient id="gold" x1="0" y1="0" x2="0" y2="1">
            <stop offset="0" stopColor="#ffe47a" />
            <stop offset="1" stopColor="#f9a94e" />
          </linearGradient>
        </defs>
      </svg>
      {dock.map((d) => <Tile key={d.id} item={d} />)}
      <div className="ml-auto">
        <Tile
          item={{ id: "trash", art: (
            <g>
              <path d={round} fill="#ff6a00" />
              <path d="M9.500 10.500h6V9h5v1.500h6V13h-17z" fill="#fff" />
              <path d="M11 13h14.500v14H11z" fill="#f2f2f2" />
              <path d="M13 25l2-4 2 3 2-5 2 5 2-3 1 4M14 20l3-1 3 1" stroke="#a9a9a9" fill="none" />
            </g>
          ) }}
        />
      </div>
    </div>
  );
}

export default function App() {
  return (
    <div className="relative flex h-[900px] w-[1600px] flex-col overflow-hidden bg-[#060b20] font-['Open_Sans','Noto_Sans',sans-serif] leading-none">
      <SystemBar />
      <Browser />
      <TracktionWindow />
      <div className="relative"><Dock /></div>
      <svg width="13" height="21" viewBox="0 0 13 21" className="absolute top-[256px] left-[340px]">
        <path d="M1 1V16.500L4.600 13.200L7.300 19.500L9.700 18.500L7 12.300H12z" fill="#fff" stroke="#111" strokeWidth="1.200" />
      </svg>
    </div>
  );
}
